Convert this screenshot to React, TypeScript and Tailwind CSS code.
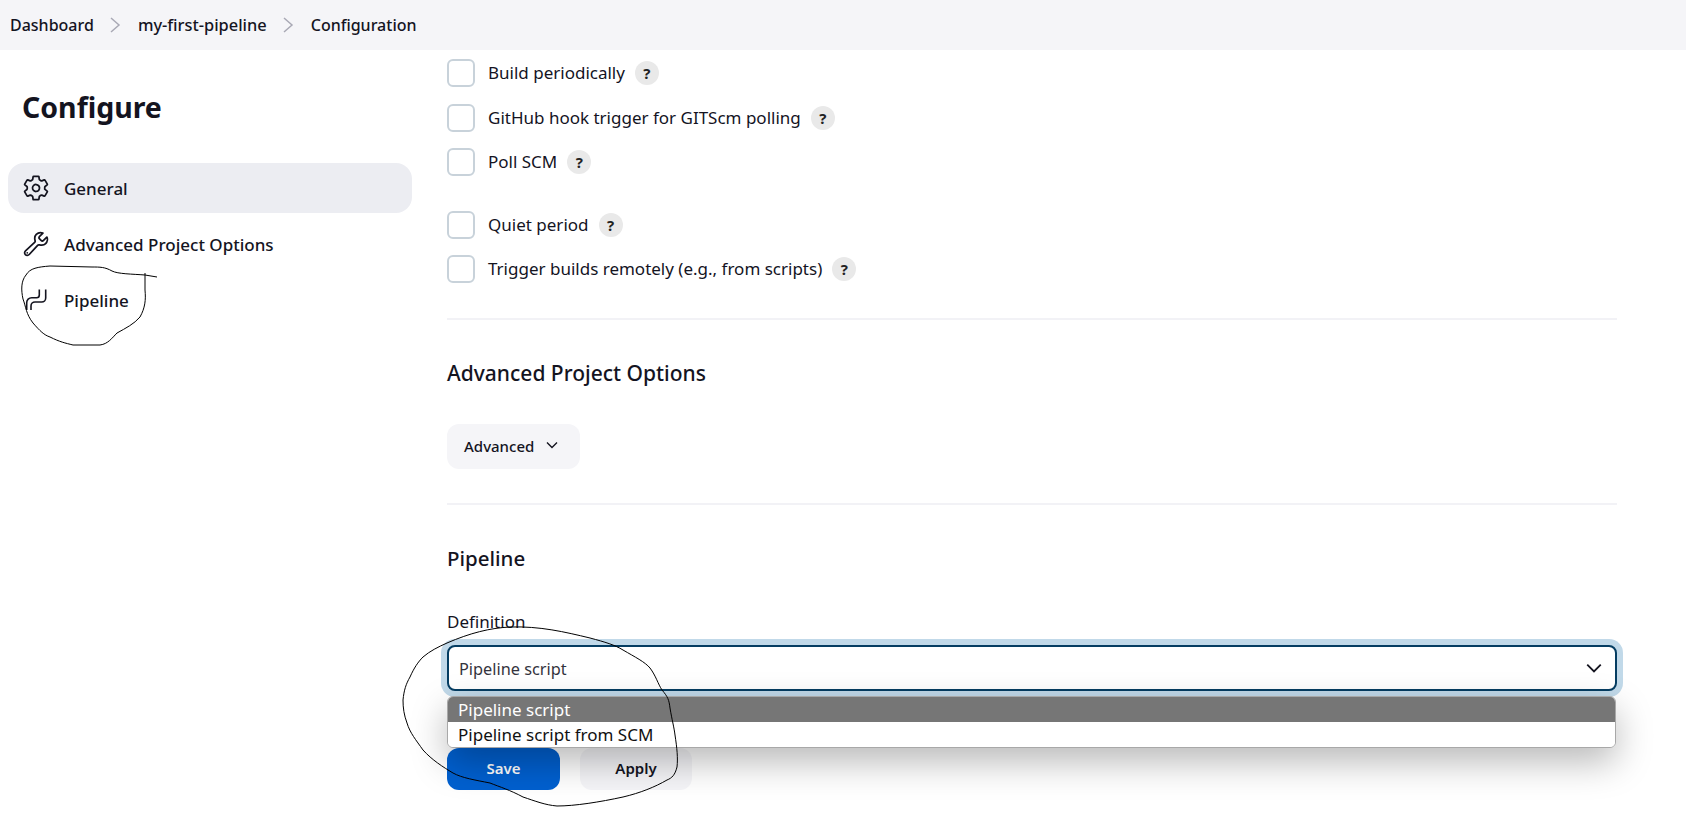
import type { ReactNode } from 'react';
import { IoSettingsOutline, IoBuildOutline } from 'react-icons/io5';

const font = "font-['Noto_Sans','Open_Sans',sans-serif]";

function Chevron({ className }: { className?: string }) {
    return (
        <svg viewBox="0 0 12 20" className={className} fill="none" stroke="currentColor" strokeWidth="1.5">
            <path d="M2 3l8 7-8 7" />
        </svg>
    );
}

function TriggerRow({ label, className }: { label: string; className?: string }) {
    return (
        <div className={`flex items-center h-7 ${className ?? ''}`}>
            <div className="w-7 h-7 rounded-md border-2 border-[#c8d2da] bg-white shrink-0" />
            <span className="ml-[13px] text-[17px] text-[#14141f]">{label}</span>
            <span className="ml-[10px] w-6 h-6 rounded-full bg-[#e9e9e9] flex items-center justify-center text-[15px] font-bold text-[#222]">?</span>
        </div>
    );
}

function NavItem({ label, active, icon }: { label: string; active?: boolean; icon: ReactNode }) {
    return (
        <div className={`flex items-center h-[50px] rounded-2xl pl-[14px] text-[17px] font-medium text-[#14141f] ${active ? 'bg-[#ecedf2]' : ''}`}>
            <span className="w-7 flex justify-center">{icon}</span>
            <span className="ml-[14px] pt-[2px]">{label}</span>
        </div>
    );
}

export default function App() {
    return (
        <div className={`relative w-[1686px] h-[820px] overflow-hidden bg-white text-[#14141f] ${font}`}>
            <div className="h-[50px] bg-[#f5f5f8] flex items-center pl-[10px] text-base text-[#14141f] font-medium">
                <span>Dashboard</span>
                <Chevron className="w-3 h-5 ml-[15px] text-[#a9a9b5]" />
                <span className="ml-[17px] text-[16.4px]">my-first-pipeline</span>
                <Chevron className="w-3 h-5 ml-[15px] text-[#a9a9b5]" />
                <span className="ml-[17px]">Configuration</span>
            </div>

            <div className="flex">
                <aside className="w-[404px] ml-2 shrink-0">
                    <h1 className="mt-[33px] ml-[14px] text-[28.5px] leading-[48px] font-bold">Configure</h1>
                    <nav className="mt-[32px] flex flex-col gap-[6px]">
                        <NavItem label="General" active icon={<IoSettingsOutline className="w-7 h-7" />} />
                        <NavItem label="Advanced Project Options" icon={<IoBuildOutline className="w-7 h-7" />} />
                        <NavItem
                            label="Pipeline"
                            icon={
                                <svg viewBox="0 0 28 28" className="w-7 h-7" fill="none" stroke="currentColor" strokeWidth="1.6">
                                    <path d="M23.7 3.5V12a4 4 0 0 1-4 4h-6.7a4 4 0 0 0-4 4v4" />
                                    <path d="M17.3 3.5V9a2.7 2.7 0 0 1-2.7 2.7H9.7a5 5 0 0 0-5 5V24" />
                                </svg>
                            }
                        />
                    </nav>
                </aside>

                <main className="ml-[35px] w-[1170px]">
                    <div className="mt-[9px] flex flex-col">
                        <TriggerRow label="Build periodically" />
                        <TriggerRow label="GitHub hook trigger for GITScm polling" className="mt-[17px]" />
                        <TriggerRow label="Poll SCM" className="mt-[16px]" />
                        <TriggerRow label="Quiet period" className="mt-[35px]" />
                        <TriggerRow label="Trigger builds remotely (e.g., from scripts)" className="mt-[16px]" />
                    </div>

                    <hr className="mt-[35px] border-t-2 border-[#f2f2f6]" />

                    <h2 className="mt-[37px] text-[21px] leading-8 font-medium">Advanced Project Options</h2>

                    <button className="mt-[35px] flex items-center h-[45px] w-[133px] rounded-xl bg-[#f5f5f8] pl-[17px] text-[15px] font-medium">
                        Advanced
                        <svg viewBox="0 0 16 16" className="w-4 h-4 ml-[10px] -mt-1" fill="none" stroke="currentColor" strokeWidth="1.4">
                            <path d="M3 5.5l5 5 5-5" />
                        </svg>
                    </button>

                    <hr className="mt-[34px] border-t-2 border-[#f2f2f6]" />

                    <h2 className="mt-[37px] text-[20.5px] leading-8 font-medium">Pipeline</h2>

                    <div className="mt-[36px] text-[17px] leading-6">Definition</div>

                    <div className="relative mt-[11px] h-[46px] rounded-lg border-2 border-[#053d62] ring-[6px] ring-[#c1d9e9] bg-white flex items-center pl-[10px] pr-[12px] text-[16.3px] text-[#33333d]">
                        <span className="flex-1 pt-[2px]">Pipeline script</span>
                        <svg viewBox="0 0 16 16" className="w-[18px] h-[18px] text-[#14141f]" fill="none" stroke="currentColor" strokeWidth="1.6">
                            <path d="M2 5l6 6 6-6" />
                        </svg>
                        {/* open select list */}
                        <div className="absolute left-[-2px] right-[-1px] top-[49px] z-10 rounded-md overflow-hidden border border-[#a8a8a8] bg-white text-[17px] leading-[25px] shadow-[0_14px_36px_rgba(0,0,0,0.28)]">
                            <div className="bg-[#767676] text-white pl-[10px]">Pipeline script</div>
                            <div className="bg-white text-[#111] pl-[10px]">Pipeline script from SCM</div>
                        </div>
                    </div>

                    <div className="mt-[57px] flex gap-5">
                        <button className="w-[113px] h-[42px] rounded-xl bg-[#0060d0] text-white text-[15px] font-semibold pb-[2px]">Save</button>
                        <button className="w-[112px] h-[42px] rounded-xl bg-[#f5f5f8] text-[15px] font-semibold pb-[2px]">Apply</button>
                    </div>
                </main>
            </div>

            {/* pen marks drawn over the screenshot */}
            <svg className="absolute inset-0 z-20 pointer-events-none" width="1686" height="820" fill="none" stroke="#000" strokeWidth="1">
                <path d="M157 277L145 275C132 274 118 274 112 271C105 267 100 267 92 267L50 266C38 267 30 268 26 275C21 281 21 290 23 299C26 307 26 314 33 323C40 331 44 335 50 337C60 342 65 343 73 345L100 345C108 344 112 338 117 333C126 328 134 324 140 317C145 308 146 300 145 290L145 273" />
                <path d="M447 643C470 633 490 628 510 627C540 626 565 632 590 638C605 642 615 645 623 650C635 657 645 662 650 668C656 676 658 684 662 690C668 697 669 700 670 708C672 720 674 727 675 735C677 748 678 758 677 767C675 775 672 778 667 780C655 787 640 793 623 797C600 802 575 806 557 806C545 805 535 801 523 797C510 790 500 787 490 783C475 780 462 778 453 773C443 767 432 760 423 750C416 740 410 733 407 723C404 715 403 708 403 700C404 690 406 684 410 677C414 668 418 662 423 657C430 651 438 647 447 643Z" />
            </svg>
        </div>
    );
}
